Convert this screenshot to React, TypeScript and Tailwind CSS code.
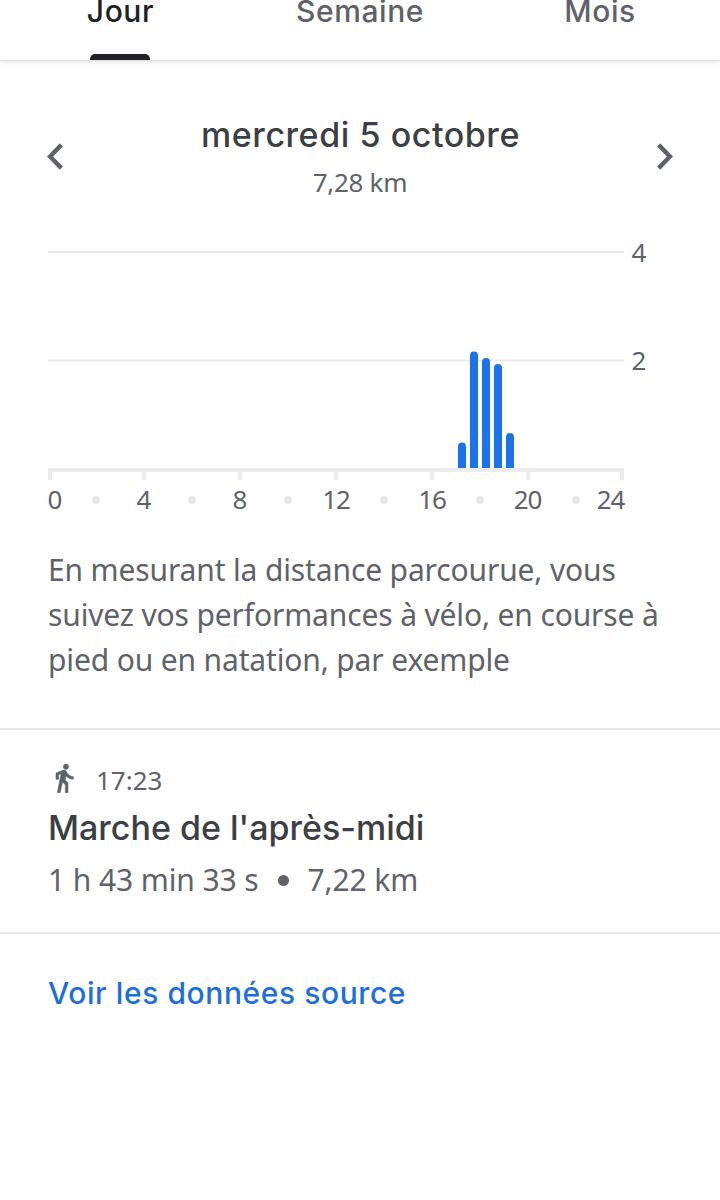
const INTER = "[font-family:Inter,sans-serif] font-medium";

const tabs = [
  { label: "Jour", active: true },
  { label: "Semaine", active: false },
  { label: "Mois", active: false },
];

const bars = [
  { x: 458, top: 442.5 },
  { x: 470, top: 351.5 },
  { x: 482, top: 358 },
  { x: 494, top: 364 },
  { x: 506, top: 433 },
];

const ticks = [48, 142, 238, 334, 430, 526, 620];

const hours = [
  { label: "0", x: 55 },
  { label: "4", x: 144 },
  { label: "8", x: 240 },
  { label: "12", x: 336.5 },
  { label: "16", x: 432.5 },
  { label: "20", x: 528 },
  { label: "24", x: 611 },
];

const dots = [96, 192, 288, 384, 480, 576];

function Chevron({ flip = false }: { flip?: boolean }) {
  return (
    <svg
      width="16"
      height="27"
      viewBox="0 0 16 27"
      className={flip ? "rotate-180" : ""}
      fill="#5f6368"
    >
      <path d="M12.8 0.3 16 3.4 6.1 13.5 16 23.6 12.8 26.7 0 13.5Z" />
    </svg>
  );
}

function Tabs() {
  return (
    <header className="grid h-[60px] grid-cols-[240px_239px_1fr] shadow-[0_1px_1px_#dedede,0_2px_6px_rgba(0,0,0,0.1)]">
      {tabs.map((t) => (
        <div key={t.label} className="flex flex-col items-center justify-between">
          <span
            className={`${INTER} pl-px text-[30px] leading-[22px] tracking-[0.6px] ${
              t.active ? "text-[#202124]" : "text-[#5f6368]"
            }`}
          >
            {t.label}
          </span>
          {t.active && <span className="h-[6px] w-[60px] rounded-t-[5px] bg-[#202124]" />}
        </div>
      ))}
    </header>
  );
}

function Chart() {
  return (
    <svg
      width="720"
      height="290"
      viewBox="0 230 720 290"
      className="block [font-family:'Noto_Sans',sans-serif] text-[26px]"
    >
      <rect x="48" y="251" width="576" height="2" fill="#e8eaed" />
      <rect x="48" y="359.5" width="576" height="2" fill="#e8eaed" />
      {bars.map((b) => (
        <path
          key={b.x}
          d={`M${b.x} 468V${b.top + 4}a4 4 0 0 1 8 0V468Z`}
          fill="#1a73e8"
        />
      ))}
      <rect x="48" y="468" width="576" height="4" fill="#ebecee" />
      {ticks.map((x) => (
        <rect key={x} x={x} y="472" width="4" height="8" fill="#ebecee" />
      ))}
      {dots.map((x) => (
        <circle key={x} cx={x} cy="500" r="4" fill="#e8e8e8" />
      ))}
      <g fill="#5f6368">
        {hours.map((h) => (
          <text
            key={h.label}
            x={h.x}
            y="509"
            textAnchor="middle"
            textLength={h.label.length > 1 ? 28.5 : undefined}
          >
            {h.label}
          </text>
        ))}
        <text x="631.5" y="262">4</text>
        <text x="631.5" y="370">2</text>
      </g>
    </svg>
  );
}

export default function App() {
  return (
    <div className="h-[1200px] w-[720px] overflow-hidden bg-white text-[#5f6368] [font-family:'Noto_Sans',sans-serif]">
      <Tabs />

      <div className="flex h-[170px] items-start justify-between px-[47px] pt-[55px]">
        <div className="pt-[28px]">
          <Chevron />
        </div>
        <div className="flex flex-col items-center">
          <h1 className={`${INTER} pl-px text-[34px] leading-[40px] tracking-[0.55px] text-[#3c4043]`}>
            mercredi 5 octobre
          </h1>
          <p className="mt-[9px] text-[26px] leading-[36px] tracking-[-0.3px]">7,28 km</p>
        </div>
        <div className="pt-[28px]">
          <Chevron flip />
        </div>
      </div>

      <Chart />

      <p className="mt-[27px] h-[181px] pl-12 text-[30px] leading-[45px] tracking-[-0.14px] whitespace-nowrap">
        En mesurant la distance parcourue, vous
        <br />
        suivez vos performances à vélo, en course à
        <br />
        pied ou en natation, par exemple
      </p>

      <section className="h-[206px] border-y-2 border-[#e8e8e8] px-12 pt-[32px]">
        <div className="flex h-[36px] items-start gap-[16px]">
          <svg
            width="32"
            height="32"
            viewBox="0 0 24 24"
            fill="#5f6368"
            stroke="#5f6368"
            strokeWidth="0.4"
          >
            <path d="M13.5 5.5c1.1 0 2-.9 2-2s-.9-2-2-2-2 .9-2 2 .9 2 2 2zM9.8 8.9 7 23h2.1l1.8-8 2.1 2v6h2v-7.5l-2.1-2 .6-3C14.8 12 16.8 13 19 13v-2c-1.9 0-3.5-1-4.3-2.4l-1-1.6c-.4-.6-1-1-1.7-1-.3 0-.5.1-.8.1L6 8.3V13h2V9.6l1.8-.7" />
          </svg>
          <span className="text-[26px] leading-[36px]">17:23</span>
        </div>
        <h2 className={`${INTER} mt-[10px] text-[34px] leading-[40px] text-[#3c4043]`}>
          Marche de l'après-midi
        </h2>
        <div className="mt-[12px] flex items-center text-[30px] leading-[40px] tracking-[-0.1px]">
          <span>1 h 43 min 33 s</span>
          <span className="mr-[19px] ml-[19px] size-[11px] rounded-full bg-[#5f6368]" />
          <span>7,22 km</span>
        </div>
      </section>

      <a className={`${INTER} mt-[39px] block pl-12 text-[30px] leading-[40px] tracking-[0.58px] text-[#1d6fdc]`}>
        Voir les données source
      </a>
    </div>
  );
}
